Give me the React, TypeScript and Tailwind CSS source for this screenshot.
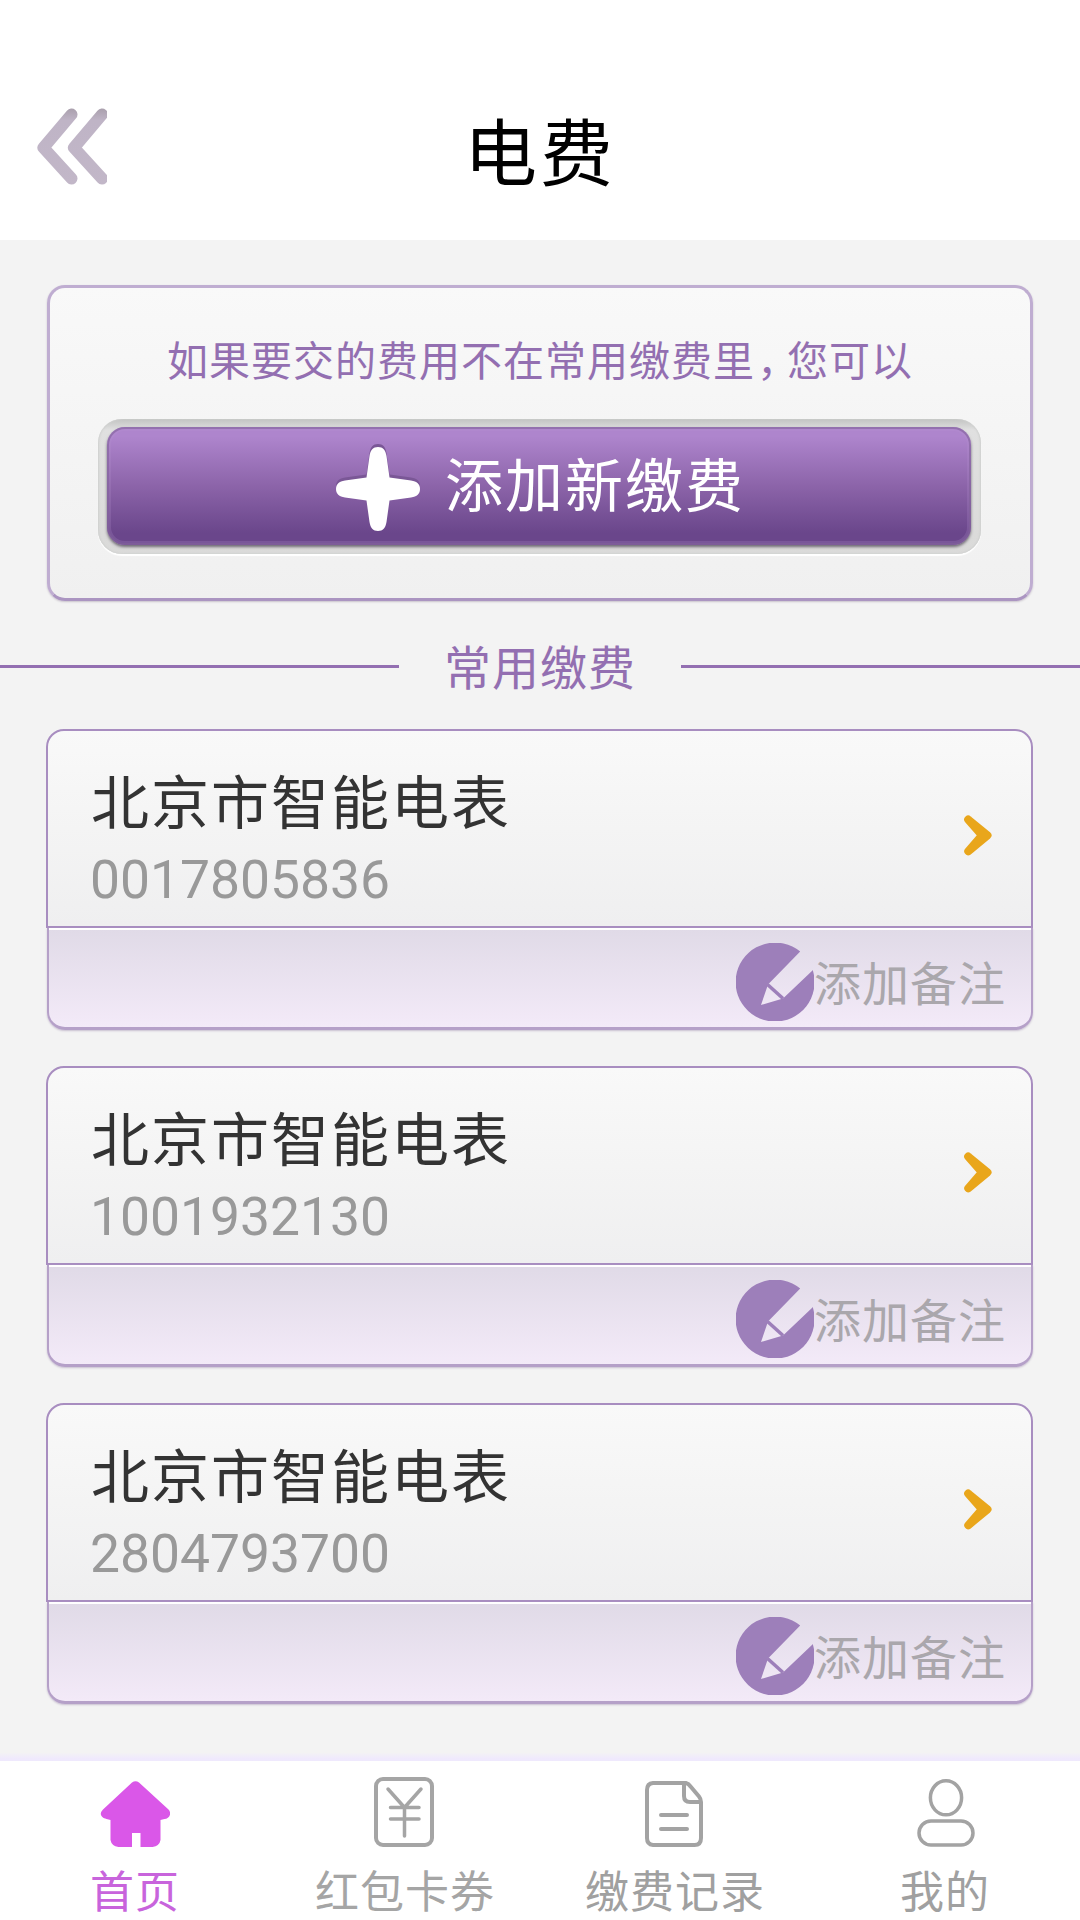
import React from "react";

const meters = [
  { name: "北京市智能电表", number: "0017805836" },
  { name: "北京市智能电表", number: "1001932130" },
  { name: "北京市智能电表", number: "2804793700" },
];

function BackIcon() {
  return (
    <svg width="70" height="80" viewBox="0 -2 70 80" fill="none" strokeLinecap="round" strokeLinejoin="round">
      <defs>
        <linearGradient id="back" x1="0" y1="-2" x2="0" y2="76" gradientUnits="userSpaceOnUse">
          <stop offset="0" stopColor="#a99fac" />
          <stop offset="0.16" stopColor="#bfb4c6" />
          <stop offset="1" stopColor="#c2b7c8" />
        </linearGradient>
      </defs>
      <path d="M34.500 4.500 L6.500 37.700 L34.500 68.500" stroke="url(#back)" strokeWidth="12" />
      <path d="M65 4.500 L37 37.700 L65 68.500" stroke="url(#back)" strokeWidth="12" />
    </svg>
  );
}

function PlusIcon() {
  const d =
    "M42 4 C47 4 49.500 7 50.500 13 L53.500 34.500 L75 37.500 C81 38.500 84 41 84 46 C84 51 81 53.500 75 54.500 L53.500 57.500 L50.500 79 C49.500 85 47 88 42 88 C37 88 34.500 85 33.500 79 L30.500 57.500 L9 54.500 C3 53.500 0 51 0 46 C0 41 3 38.500 9 37.500 L30.500 34.500 L33.500 13 C34.500 7 37 4 42 4 Z";
  return (
    <svg width="84" height="88" viewBox="0 0 84 88" className="mt-px shrink-0">
      <path d={d} fill="#7a5796" transform="translate(0 -3)" />
      <path d={d} fill="#fff" />
    </svg>
  );
}

function ChevronIcon() {
  return (
    <svg width="28" height="41" viewBox="0 0 28 41" fill="#e9a61b" stroke="#e9a61b" strokeWidth="8" strokeLinejoin="round">
      <path d="M4.200 4.500 L23.500 20.300 L4.200 36.300 L18 20.300 Z" />
    </svg>
  );
}

function PencilBadge() {
  return (
    <svg width="78" height="78" viewBox="0 0 78 78" className="shrink-0">
      <path d="M64.200 8.600 A39.500 39.500 0 1 0 77 28 L77 27 L47 55.500 L25 62 L32 41.500 Z" fill="#9d7fba" />
      <path d="M31.500 41.500 L47 55.500" stroke="#9d7fba" strokeWidth="3.500" />
    </svg>
  );
}

function HomeIcon() {
  return (
    <svg width="70" height="66" viewBox="-0.5 0 70 66" fill="#da57e8">
      <path d="M31.500 1.500 Q35 -1.200 38.500 1.500 L68 28.500 C72 33 68 38 64 38 L60 39 L60 59 Q59 65 52 66 L40 66 L40 52 L31.500 52 L31.500 66 L18 66 Q11 65 10 59 L10 39 L6 38 C1 37 -2 33 2.500 28.500 Z" />
    </svg>
  );
}

function CouponIcon() {
  return (
    <svg width="60" height="70" viewBox="0 0 60 70" className="-ml-[2px]" fill="none" stroke="#a5a5a5" strokeLinecap="round">
      <rect x="2" y="2" width="56" height="66" rx="7" strokeWidth="4" />
      <path d="M14 12 L30.500 30.500 L47 12 M30.500 30.500 V59 M16.500 30.500 H45 M16.500 42 H45" strokeWidth="3.500" />
    </svg>
  );
}

function RecordIcon() {
  return (
    <svg width="58" height="66" viewBox="0 0 58 66" className="-ml-[2px]" fill="none" stroke="#a3a3a3" strokeWidth="4" strokeLinecap="round" strokeLinejoin="round">
      <path d="M8 2 H41 Q43.500 2.500 46 6 L54 15.500 Q56 18 56 21 V57 Q56 64 49.500 64 H8 Q2 63.500 2 57 V9 Q2 2.500 8 2 Z" />
      <path d="M39 3 V15 Q39 21 45 21 H55 M16 34 H42 M16 48 H42" />
    </svg>
  );
}

function UserIcon() {
  return (
    <svg width="58" height="68" viewBox="0 0 58 68" className="ml-[2px]" fill="none" stroke="#a3a3a3" strokeWidth="3.500">
      <ellipse cx="29" cy="18.800" rx="15.600" ry="17" />
      <rect x="2" y="42" width="54" height="24" rx="12" />
    </svg>
  );
}

const tabs = [
  { label: "首页", icon: <HomeIcon />, color: "text-[#c864dc]" },
  { label: "红包卡券", icon: <CouponIcon />, color: "text-[#a5a5a5]" },
  { label: "缴费记录", icon: <RecordIcon />, color: "text-[#a0a0a0]" },
  { label: "我的", icon: <UserIcon />, color: "text-[#a0a0a0]" },
];

function MeterCard({ name, number }: { name: string; number: string }) {
  return (
    <article className="h-[302px]">
      <div className="-ml-px flex h-[199px] items-start justify-between rounded-t-[18px] border-2 border-[#a88dc0] bg-linear-to-b from-[#f9f9f9] via-[#f4f4f4] to-[#efeff0] pr-[39px] pl-[43px]">
        <div className="flex flex-col pt-[32px]">
          <h2 className="text-[58px] leading-[72px] tracking-[2px] text-[#333]">{name}</h2>
          <p className="-ml-px mt-[9px] font-[Roboto,sans-serif] text-[53.4px] leading-[72px] text-[#999]">{number}</p>
        </div>
        <span className="pt-[84px]">
          <ChevronIcon />
        </span>
      </div>
      <div className="flex h-[102px] items-start justify-end rounded-b-[18px] border-x-2 border-b-3 border-[#b5a0c8] bg-linear-to-b from-[#e0dae7] to-[#f3eaf8] pt-[15px] pr-[25px] shadow-[inset_0_2px_0_#fff,0_1px_2px_#c8bfd0]">
        <PencilBadge />
        <span className="pt-[8px] text-[47px] leading-[60px] tracking-[1px] text-[#aaa7ac]">添加备注</span>
      </div>
    </article>
  );
}

export default function App() {
  return (
    <div className="flex h-[1920px] w-[1080px] flex-col overflow-hidden bg-[#f3f3f3] font-['Noto_Sans_CJK_SC',sans-serif]">
      <header className="grid h-[240px] shrink-0 grid-cols-[140px_1fr_140px] items-center bg-white pt-[56px]">
        <button className="pl-[37px]" aria-label="返回">
          <BackIcon />
        </button>
        <h1 className="text-center text-[73px] leading-[90px] tracking-[3px] text-black">电费</h1>
      </header>

      <main className="flex flex-1 flex-col">
        <section className="mx-[47px] mt-[45px] h-[316px] shrink-0 rounded-[18px] border-3 border-[#bfadd1] border-b-[#ab95c1] bg-linear-to-b from-[#f9f9f9] to-[#f0f0f0] px-[48px] pt-[42px] shadow-[0_1px_2px_#c8c2cb]">
          <p className="text-center text-[41px] leading-[56px] tracking-[1px] whitespace-nowrap text-[#936fb1]">
            如果要交的费用不在常用缴费里<span className="ml-[2px] tracking-[-11px]">，</span>您可以
          </p>
          <div className="mt-[33px] h-[135px] w-[883px] rounded-[24px] bg-linear-to-b from-[#c2c3c2] via-[#e0e0e0] via-8% to-[#dadad9] pt-[8px] pr-[10px] pl-[9px] shadow-[inset_1px_0_2px_#cfd0cf,inset_-1px_0_2px_#cfd0cf,0_2px_1px_#fff]">
            <button className="flex h-[118px] w-full items-center rounded-[18px] bg-linear-to-b from-[#ae85cd] from-8% via-[#8c64a9] via-50% to-[#6a468b] to-90% pl-[229px] shadow-[inset_0_0_0_2px_#80609a99,inset_0_0_0_4px_#b794d033,0_2px_3px_#6f6a75]">
              <PlusIcon />
              <span className="ml-[25px] pb-[8px] text-[58px] leading-[72px] tracking-[2px] text-white">添加新缴费</span>
            </button>
          </div>
        </section>

        <div className="flex h-[128px] shrink-0 items-center">
          <span className="mt-[3px] h-[3px] w-[399px] bg-[#936fb1]" />
          <h2 className="flex-1 text-center text-[47px] leading-[64px] tracking-[1px] text-[#936fb1]">常用缴费</h2>
          <span className="mt-[3px] h-[3px] w-[399px] bg-[#936fb1]" />
        </div>

        <section className="mx-[47px] flex flex-col gap-[35px]">
          {meters.map((m) => (
            <MeterCard key={m.number} {...m} />
          ))}
        </section>
      </main>

      <nav className="h-[167px] shrink-0">
        <div className="h-[8px] bg-linear-to-b from-[#f3f2f4] to-[#efe9fd] to-70%" />
        <div className="grid h-[159px] grid-cols-4 bg-white">
          {tabs.map((t) => (
            <a key={t.label} className="flex flex-col items-center">
              <span className="flex h-[86px] items-end">{t.icon}</span>
              <span className={`mt-[10px] text-[44px] leading-[64px] tracking-[1px] ${t.color}`}>{t.label}</span>
            </a>
          ))}
        </div>
      </nav>
    </div>
  );
}
